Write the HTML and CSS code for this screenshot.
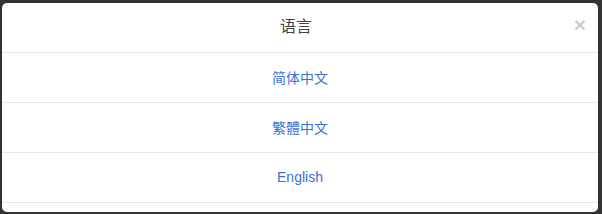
FILE: index.html
```html
<!DOCTYPE html>
<html lang="zh">
<head>
  <meta charset="UTF-8" />
  <title>语言</title>
  <link rel="stylesheet" href="styles.css">
</head>
<body>
  <div class="modal">
    <div class="modal-header">
      <h4 class="modal-title">语言</h4>
      <button class="close" type="button">&times;</button>
    </div>
    <ul class="lang-list">
      <li><a href="#">简体中文</a></li>
      <li><a href="#">繁體中文</a></li>
      <li><a href="#">English</a></li>
    </ul>
  </div>
</body>
</html>
```

FILE: styles.css
```css
* {
  margin: 0;
  padding: 0;
  box-sizing: border-box;
}

body {
  background: #333;
  padding: 3px 4px 2px 2px;
  font-family: "Liberation Sans", Arial, "Noto Sans CJK SC", sans-serif;
}

/* Modal */
.modal {
  height: 209px;
  background: #fff;
  border-radius: 5px;
  overflow: hidden;
}

.modal-header {
  position: relative;
  height: 50px;
  padding-bottom: 5px;
  border-bottom: 1px solid #e5e5e5;
  display: flex;
  align-items: center;
  justify-content: center;
}

.modal-title {
  margin-right: 8px;
  font-size: 16px;
  font-weight: normal;
  color: #444;
}

.close {
  position: absolute;
  right: 12px;
  top: 11px;
  background: none;
  border: none;
  font-family: "Liberation Sans", Arial, sans-serif;
  font-size: 21px;
  font-weight: bold;
  line-height: 1;
  color: #000;
  opacity: 0.2;
  cursor: pointer;
}

/* Language list */
.lang-list {
  list-style: none;
}

.lang-list li {
  height: 50px;
  padding-bottom: 2px;
  border-bottom: 1px solid #e8e8e8;
  display: flex;
  align-items: center;
  justify-content: center;
}

.lang-list li a {
  font-size: 14px;
  color: #3a72d4;
  text-decoration: none;
}
```
